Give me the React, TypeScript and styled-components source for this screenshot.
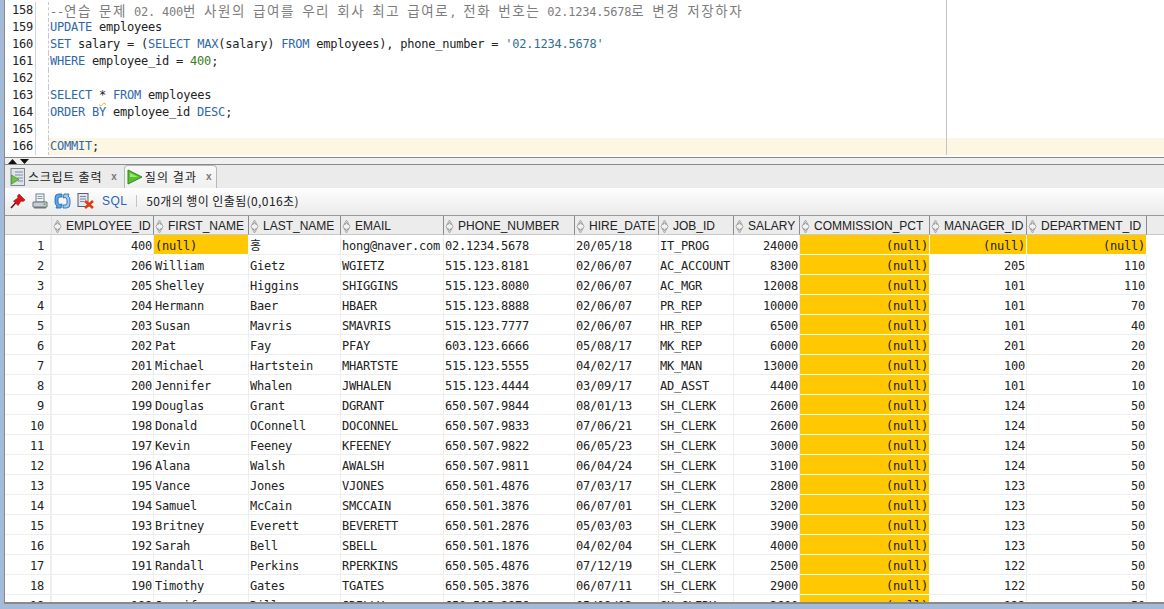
import React from "react";
import styled, { createGlobalStyle } from "styled-components";

const Global = createGlobalStyle`
  html, body { margin: 0; padding: 0; width: 100%; height: 100%; overflow: hidden; background: #a3bbd8; }
  * { box-sizing: border-box; }
`;

const MONO = `"DejaVu Sans Mono", "Noto Sans CJK KR", monospace`;
const UI = `"Liberation Sans", "Noto Sans CJK KR", sans-serif`;
const KR = `"Noto Sans CJK KR", "Liberation Sans", sans-serif`;
const COLS = "47px 102px 95px 92px 103px 131px 84px 75px 66px 130px 97px 120px";

const Frame = styled.div`
  width: 1164px; height: 609px; padding: 0 0 5px 4px; background: #a3bbd8;
  display: flex; flex-direction: column;
`;
const Inner = styled.div`
  flex: 1; min-height: 0; background: #fff; border-left: 1px solid #8a8a8a; border-bottom: 2px solid #8a8a8a;
  display: flex; flex-direction: column; overflow: hidden;
`;
const Editor = styled.section`
  position: relative; height: 158px; padding-top: 2px; border-bottom: 1px solid #8a8a8a; flex: none; background: #fff;
`;
const Margin = styled.div`
  position: absolute; left: 941px; top: 0; bottom: 2px; width: 1px; background: #c4c4c4; z-index: 1;
`;
const CodeLine = styled.div`
  display: grid; grid-template-columns: 31px 13px 1fr; height: 17px;
  font: 12px/17px ${MONO}; letter-spacing: -0.22px; color: #222;
`;
const LineNo = styled.div`
  text-align: right; padding-right: 2px; color: #222; border-right: 1px solid #d4d4d4;
`;
const Fold = styled.div`
  border-right: 1px dashed #c8c8c8;
`;
const Code = styled.div<{ $active?: boolean }>`
  padding-left: 1px; white-space: pre; background: ${p => (p.$active ? "#fdf6e3" : "transparent")};
`;
const Kw = styled.span` color: #2f68a8; `;
const Num = styled.span` color: #3a7d1e; `;
const Str = styled.span` color: #2f6f8f; `;
const Cmt = styled.span` color: #7d7d7d; `;
const Hangul = styled.span` font-family: ${KR}; font-size: 13.5px; letter-spacing: 1.58px; `;
const Squiggle = styled.span`
  text-decoration: underline wavy #e8b400 1px; text-underline-offset: 3px;
`;
const Splitter = styled.div`
  height: 7px; flex: none; background: #f0f0f0; border-bottom: 1px solid #8a8a8a;
  display: flex; gap: 3px; padding: 1px 0 0 3px; align-items: flex-start;
`;
const TabBar = styled.div`
  height: 24px; flex: none; background: #ebebeb; border-bottom: 1px solid #fff;
  display: flex; align-items: flex-end; padding-left: 3px;
`;
const Tab = styled.div<{ $active?: boolean }>`
  height: 23px; display: flex; align-items: center; gap: 2px; padding: 0 4px 0 2px;
  font: 12px/16px ${KR}; letter-spacing: 0.75px; color: #222;
  ${p => p.$active ? `
    margin-left: 3px; background: linear-gradient(#f8f8f8, #f0f0f0); border: 1px solid #b8b8b8;
    border-bottom: none; border-radius: 4px 4px 0 0; letter-spacing: 1.1px;
  ` : ""}
`;
const Close = styled.span`
  font: bold 10px/12px ${UI}; color: #777; margin-left: 7px; letter-spacing: 0;
`;
const Toolbar = styled.div`
  height: 26px; flex: none; background: linear-gradient(#fdfdfd, #ebebeb);
  display: flex; align-items: center; padding: 0 0 2px 5px; gap: 6px;
`;
const SqlLink = styled.span`
  font: 12px/16px ${UI}; color: #2a62b8; letter-spacing: 0.4px; margin-left: 2px;
`;
const Sep = styled.span`
  width: 1px; height: 12px; background: #c4c4c4; margin: 0 3px;
`;
const Status = styled.span`
  font: 12px/16px ${KR}; color: #222; letter-spacing: 0.4px;
`;
const Grid = styled.div`
  flex: 1; min-height: 0; overflow: hidden; background: #fff; border-top: 1px solid #9a9a9a;
`;
const HeadRow = styled.div`
  display: grid; grid-template-columns: ${COLS} 1fr; height: 19px; background: #ececec;
`;
const Head = styled.div`
  display: flex; align-items: center; gap: 4px; padding: 2px 0 0 1px; border-right: 1px solid #8c8c8c;
  border-bottom: 1px solid #c8c8c8; font: 12px/16px ${UI}; color: #222; overflow: hidden; white-space: nowrap;
`;
const HeadBlank = styled.div` border-right: 1px solid #dcdcdc; border-bottom: 1px solid #c8c8c8; `;
const HeadFill = styled.div` border-bottom: 1px solid #c8c8c8; background: #ececec; `;
const Row = styled.div`
  display: grid; grid-template-columns: ${COLS} 1fr; height: 20px;
`;
const RowNo = styled.div`
  text-align: right; padding: 3px 6px 0 0; font: 12px/16px ${MONO}; letter-spacing: -0.22px; color: #222;
  border-right: 2px solid #eee; border-bottom: 1px solid #eee;
`;
const Cell = styled.div<{ $right?: boolean; $nil?: boolean }>`
  font: 12px/16px ${MONO}; letter-spacing: -0.22px; color: #222; white-space: nowrap; overflow: hidden;
  padding: 3px 1px 0; text-align: ${p => (p.$right ? "right" : "left")};
  background: ${p => (p.$nil ? "#ffc800" : "#fff")};
  border-right: 1px solid ${p => (p.$nil ? "#fff" : "#eee")};
  border-bottom: 1px solid ${p => (p.$nil ? "#fff" : "#eee")};
`;
const Trail = styled.div`
  border-bottom: 0;
`;
const Sv = styled.svg` flex: none; display: block; `;

const SortIcon = () => (
  <Sv width="9" height="15" viewBox="0 0 9 15">
    <path d="M4.5 1 8 7.5 4.5 14 1 7.5Z" fill="#f2f2f2" stroke="#a8a8a8" />
    <path d="M2.5 6 4.5 3.5 6.5 6M2.5 9 4.5 11.5 6.5 9" fill="none" stroke="#8e8e8e" />
  </Sv>
);
const Up = () => <Sv width="9" height="5" viewBox="0 0 9 5"><path d="M0 5 4.5 0 9 5Z" fill="#111" /></Sv>;
const Down = () => <Sv width="9" height="5" viewBox="0 0 9 5"><path d="M0 0 4.5 5 9 0Z" fill="#111" /></Sv>;
const ScriptIcon = () => (
  <Sv width="16" height="18" viewBox="0 0 16 18">
    <rect x="1" y="0.5" width="13.5" height="17" fill="#dfe3ea" stroke="#7e8794" />
    <path d="M5 4h8M5 7h8M7 10h6M8 13h5" stroke="#7e8ca3" />
    <path d="M1.5 7 9 11.5 1.5 16Z" fill="#6cc24a" stroke="#3f8f2a" strokeWidth=".7" />
  </Sv>
);
const PlayIcon = () => (
  <Sv width="16" height="16" viewBox="0 0 16 16">
    <path d="M1 1 15 8 1 15Z" fill="#55c22e" stroke="#2c8a1a" />
    <path d="M3 4 11 8 3 8Z" fill="#a4e57a" />
  </Sv>
);
const PinIcon = () => (
  <Sv width="16" height="16" viewBox="0 0 16 16">
    <path d="M1 15 6 9.5" stroke="#5a1010" strokeWidth="1.5" />
    <path d="M9 1 15 7 13 8.5 11 8 8 12.5 3.5 8 8 5 7.5 3Z" fill="#d7141a" stroke="#8c0d10" strokeWidth=".6" />
  </Sv>
);
const PrintIcon = () => (
  <Sv width="16" height="16" viewBox="0 0 16 16">
    <rect x="4" y="1" width="8" height="8" fill="#f3f5f8" stroke="#6f7f94" />
    <path d="M5.5 3.5h5M5.5 5.5h5" stroke="#8b98aa" />
    <path d="M1 9h14v5H1Z" fill="#c9ccd1" stroke="#6f7579" />
    <rect x="2" y="14" width="12" height="1.5" fill="#6f7579" />
    <rect x="11.5" y="10.5" width="2" height="1.5" fill="#55b13c" />
  </Sv>
);
const RefreshIcon = () => (
  <Sv width="17" height="16" viewBox="0 0 17 16">
    <path d="M8 1H4.500Q1 1 1 5v4Q1 12 3 13l-1 2h5l1-4-2 .5Q4 11 4 9V6Q4 4 6 4h2Z" fill="#5aa6e6" stroke="#1d5fa8" strokeWidth=".8" />
    <path d="M9 15h3.500Q16 15 16 11V7Q16 4 14 3l1-2h-5L9 5l2-.5Q13 5 13 7v3Q13 12 11 12H9Z" fill="#9ccbf2" stroke="#1d5fa8" strokeWidth=".8" />
  </Sv>
);
const DeleteIcon = () => (
  <Sv width="17" height="16" viewBox="0 0 17 16">
    <rect x="1" y="0.500" width="10" height="13" fill="#e4e7ee" stroke="#56607a" />
    <path d="M3 3.500h6M3 6h6M3 8.500h4" stroke="#7b86a0" />
    <path d="M8 8 16 15M16 8 8 15" stroke="#e03a10" strokeWidth="2.600" />
  </Sv>
);

const withHangul = (text: string) =>
  text.split(/([\uAC00-\uD7A3]+)/).map((part, i) =>
    /[\uAC00-\uD7A3]/.test(part) ? <Hangul key={i}>{part}</Hangul> : part
  );

const codeLines: React.ReactNode[] = [
  <Cmt>{withHangul("--연습 문제 02. 400번 사원의 급여를 우리 회사 최고 급여로, 전화 번호는 02.1234.5678로 변경 저장하자")}</Cmt>,
  <><Kw>UPDATE</Kw> employees</>,
  <><Kw>SET</Kw> salary = (<Kw>SELECT</Kw> <Kw>MAX</Kw>(salary) <Kw>FROM</Kw> employees), phone_number = <Str>'02.1234.5678'</Str></>,
  <><Kw>WHERE</Kw> employee_id = <Num>400</Num>;</>,
  "",
  <><Kw>SELECT</Kw> <Squiggle>*</Squiggle> <Kw>FROM</Kw> employees</>,
  <><Kw>ORDER BY</Kw> employee_id <Kw>DESC</Kw>;</>,
  "",
  <><Kw>COMMIT</Kw>;</>,
];

const headers = ["EMPLOYEE_ID", "FIRST_NAME", "LAST_NAME", "EMAIL", "PHONE_NUMBER", "HIRE_DATE", "JOB_ID", "SALARY", "COMMISSION_PCT", "MANAGER_ID", "DEPARTMENT_ID"];
const rightCols = new Set([0, 7, 8, 9, 10]);
const N = "(null)";
const rows: string[][] = [
  ["400", N, "홍", "hong@naver.com", "02.1234.5678", "20/05/18", "IT_PROG", "24000", N, N, N],
  ["206", "William", "Gietz", "WGIETZ", "515.123.8181", "02/06/07", "AC_ACCOUNT", "8300", N, "205", "110"],
  ["205", "Shelley", "Higgins", "SHIGGINS", "515.123.8080", "02/06/07", "AC_MGR", "12008", N, "101", "110"],
  ["204", "Hermann", "Baer", "HBAER", "515.123.8888", "02/06/07", "PR_REP", "10000", N, "101", "70"],
  ["203", "Susan", "Mavris", "SMAVRIS", "515.123.7777", "02/06/07", "HR_REP", "6500", N, "101", "40"],
  ["202", "Pat", "Fay", "PFAY", "603.123.6666", "05/08/17", "MK_REP", "6000", N, "201", "20"],
  ["201", "Michael", "Hartstein", "MHARTSTE", "515.123.5555", "04/02/17", "MK_MAN", "13000", N, "100", "20"],
  ["200", "Jennifer", "Whalen", "JWHALEN", "515.123.4444", "03/09/17", "AD_ASST", "4400", N, "101", "10"],
  ["199", "Douglas", "Grant", "DGRANT", "650.507.9844", "08/01/13", "SH_CLERK", "2600", N, "124", "50"],
  ["198", "Donald", "OConnell", "DOCONNEL", "650.507.9833", "07/06/21", "SH_CLERK", "2600", N, "124", "50"],
  ["197", "Kevin", "Feeney", "KFEENEY", "650.507.9822", "06/05/23", "SH_CLERK", "3000", N, "124", "50"],
  ["196", "Alana", "Walsh", "AWALSH", "650.507.9811", "06/04/24", "SH_CLERK", "3100", N, "124", "50"],
  ["195", "Vance", "Jones", "VJONES", "650.501.4876", "07/03/17", "SH_CLERK", "2800", N, "123", "50"],
  ["194", "Samuel", "McCain", "SMCCAIN", "650.501.3876", "06/07/01", "SH_CLERK", "3200", N, "123", "50"],
  ["193", "Britney", "Everett", "BEVERETT", "650.501.2876", "05/03/03", "SH_CLERK", "3900", N, "123", "50"],
  ["192", "Sarah", "Bell", "SBELL", "650.501.1876", "04/02/04", "SH_CLERK", "4000", N, "123", "50"],
  ["191", "Randall", "Perkins", "RPERKINS", "650.505.4876", "07/12/19", "SH_CLERK", "2500", N, "122", "50"],
  ["190", "Timothy", "Gates", "TGATES", "650.505.3876", "06/07/11", "SH_CLERK", "2900", N, "122", "50"],
  ["189", "Jennifer", "Dilly", "JDILLY", "650.505.2876", "05/08/13", "SH_CLERK", "3600", N, "122", "50"],
];

export default function App() {
  return (
    <Frame>
      <Global />
      <Inner>
        <Editor>
          <Margin />
          {codeLines.map((c, i) => (
            <CodeLine key={i}>
              <LineNo>{158 + i}</LineNo>
              <Fold />
              <Code $active={i === 8}>{c}</Code>
            </CodeLine>
          ))}
        </Editor>
        <Splitter><Up /><Down /></Splitter>
        <TabBar>
          <Tab><ScriptIcon />스크립트 출력<Close>x</Close></Tab>
          <Tab $active><PlayIcon />질의 결과<Close>x</Close></Tab>
        </TabBar>
        <Toolbar>
          <PinIcon /><PrintIcon /><RefreshIcon /><DeleteIcon />
          <SqlLink>SQL</SqlLink>
          <Sep />
          <Status>50개의 행이 인출됨(0,016초)</Status>
        </Toolbar>
        <Grid>
          <HeadRow>
            <HeadBlank />
            {headers.map(h => <Head key={h}><SortIcon />{h}</Head>)}
            <HeadFill />
          </HeadRow>
          {rows.map((r, i) => (
            <Row key={i}>
              <RowNo>{i + 1}</RowNo>
              {r.map((v, j) => (
                <Cell key={j} $right={rightCols.has(j)} $nil={v === N}>{v}</Cell>
              ))}
              <Trail />
            </Row>
          ))}
        </Grid>
      </Inner>
    </Frame>
  );
}
